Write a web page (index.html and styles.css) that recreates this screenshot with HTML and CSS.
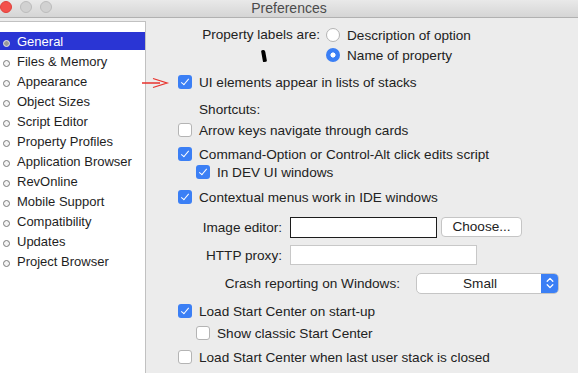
FILE: index.html
```html
<!DOCTYPE html>
<html lang="en">
<head>
  <meta charset="UTF-8">
  <title>Preferences</title>
  <link rel="stylesheet" href="styles.css">
</head>
<body>
  <div class="window">
    <!-- Title bar -->
    <div class="titlebar">
      <span class="light red"></span>
      <span class="light"></span>
      <span class="light"></span>
      <div class="title">Preferences</div>
    </div>

    <div class="content">
      <ul class="sidebar">
        <li class="selected">General</li>
        <li>Files &amp; Memory</li>
        <li>Appearance</li>
        <li>Object Sizes</li>
        <li>Script Editor</li>
        <li>Property Profiles</li>
        <li>Application Browser</li>
        <li>RevOnline</li>
        <li>Mobile Support</li>
        <li>Compatibility</li>
        <li>Updates</li>
        <li>Project Browser</li>
      </ul>

      <div class="panel">
        <div class="labels-grid">
          <div class="grid-label">Property labels are:</div>
          <div class="option"><span class="radio"></span>Description of option</div>
          <div></div>
          <div class="option"><span class="radio on"></span>Name of property</div>
        </div>

        <div class="row r3"><span class="check on"></span>UI elements appear in lists of stacks</div>
        <div class="row r4 heading">Shortcuts:</div>
        <div class="row r5"><span class="check"></span>Arrow keys navigate through cards</div>
        <div class="row r6"><span class="check on"></span>Command-Option or Control-Alt click edits script</div>
        <div class="row r7 indent"><span class="check on"></span>In DEV UI windows</div>
        <div class="row r8"><span class="check on"></span>Contextual menus work in IDE windows</div>

        <div class="field-row r9">
          <div class="field-label">Image editor:</div>
          <div class="field dark"></div>
          <div class="button">Choose...</div>
        </div>
        <div class="field-row r10">
          <div class="field-label">HTTP proxy:</div>
          <div class="field wide"></div>
        </div>
        <div class="field-row r11">
          <div class="field-label long">Crash reporting on Windows:</div>
          <div class="popup">
            <span class="popup-text">Small</span>
            <span class="stepper">
              <svg width="8" height="12" viewBox="0 0 8 12">
                <path d="M1.2 4.2 L4 1.4 L6.8 4.2 M1.2 7.8 L4 10.6 L6.8 7.8" fill="none" stroke="#fff" stroke-width="1.3" stroke-linecap="round" stroke-linejoin="round"/>
              </svg>
            </span>
          </div>
        </div>

        <div class="row r12"><span class="check on"></span>Load Start Center on start-up</div>
        <div class="row r13 indent"><span class="check"></span>Show classic Start Center</div>
        <div class="row r14"><span class="check"></span>Load Start Center when last user stack is closed</div>
      </div>

      <!-- annotations drawn over the window -->
      <svg class="arrow" width="28" height="12" viewBox="0 0 28 12">
        <path d="M0 6 H18 M11 1.5 L25 6 L11 10.5" fill="none" stroke="#e8322c" stroke-width="1.3"/>
      </svg>
      <span class="mark"></span>
    </div>
  </div>
</body>
</html>
```

FILE: styles.css
```css
body {
  margin: 0;
  font-family: "Liberation Sans", Arial, sans-serif;
  font-size: 13px;
  color: #222;
  background: #ececec;
  overflow: hidden;
}

.window {
  width: 578px;
  height: 373px;
  background: #ececec;
  overflow: hidden;
}

/* Title bar */
.titlebar {
  position: relative;
  height: 16px;
  background: linear-gradient(to bottom, #e9e9e9, #d5d5d5);
  border-bottom: 1px solid #b1b1b1;
  display: flex;
  gap: 8px;
  padding-top: 1px;
  box-sizing: content-box;
}

.light {
  width: 12px;
  height: 12px;
  border-radius: 50%;
  background: #d1d1d1;
  border: 0.5px solid #bcbcbc;
  box-sizing: border-box;
}

.light.red {
  background: #f3514c;
  border-color: #e0403b;
}

.title {
  position: absolute;
  left: 0;
  right: 0;
  top: 1px;
  text-align: center;
  color: #4b4b4b;
  font-size: 14px;
  line-height: 14px;
}

.content {
  position: relative;
  display: flex;
  height: 356px;
  overflow: hidden;
}

/* Sidebar list */
.sidebar {
  list-style: none;
  margin: 3px 0 0 -1px;
  padding: 10px 0 0 0;
  width: 147px;
  background: #fff;
  border: 1px solid #c1c1c1;
  border-bottom: none;
  box-sizing: border-box;
  flex-shrink: 0;
}

.sidebar li {
  position: relative;
  height: 18px;
  line-height: 20px;
  margin-bottom: 2px;
  padding-left: 17px;
  color: #1e1e1e;
  white-space: nowrap;
}

.sidebar li::before {
  content: "";
  position: absolute;
  left: 3px;
  top: 8px;
  width: 5px;
  height: 5px;
  border-radius: 50%;
  border: 1px solid #7a7a7a;
  background: #f4f4f4;
}

.sidebar li.selected {
  background: #2a35d4;
  color: #fff;
}

.sidebar li.selected::before {
  background: #9a9a9a;
  border-color: #e6e6e6;
}

/* Right panel */
.panel {
  flex: 1;
  padding: 8px 0 0 32px;
  font-size: 13.6px;
}

.labels-grid {
  display: grid;
  grid-template-columns: 142px auto;
  column-gap: 6px;
  row-gap: 2px;
}

.grid-label {
  text-align: right;
  line-height: 18px;
  white-space: nowrap;
}

.option {
  display: flex;
  align-items: center;
  gap: 7px;
  height: 18px;
}

.radio {
  width: 14px;
  height: 14px;
  border-radius: 50%;
  border: 1px solid #b4b4b4;
  background: #fff;
  box-sizing: border-box;
}

.radio.on {
  border: none;
  background: radial-gradient(circle, #fff 0 2.3px, #3b7ff5 2.8px);
}

.row {
  display: flex;
  align-items: center;
  gap: 7px;
  height: 18px;
  white-space: nowrap;
}

.indent {
  padding-left: 18px;
}

.heading {
  padding-left: 21px;
}

.check {
  width: 14px;
  height: 14px;
  border-radius: 3px;
  border: 1px solid #b4b4b4;
  background: #fff;
  box-sizing: border-box;
  flex-shrink: 0;
  position: relative;
}

.check.on {
  border: none;
  background: #3b7ff5;
}

.check.on::after {
  content: "";
  position: absolute;
  left: 5px;
  top: 2px;
  width: 3px;
  height: 7px;
  border: solid #fff;
  border-width: 0 1.6px 1.6px 0;
  transform: rotate(40deg);
}

.r3 { margin-top: 9px; }
.r4 { margin-top: 9px; }
.r5 { margin-top: 3px; }
.r6 { margin-top: 6px; }
.r7 { margin-top: 0; }
.r8 { margin-top: 7px; }
.r9 { margin-top: 11px; height: 21px; }
.r10 { margin-top: 8px; }
.r11 { margin-top: 8px; }
.r12 { margin-top: 9px; }
.r13 { margin-top: 4px; }
.r14 { margin-top: 6px; }

.field-row {
  display: flex;
  align-items: center;
  height: 20px;
}

.field-label {
  width: 104px;
  text-align: right;
  margin-right: 8px;
  white-space: nowrap;
}

.field-label.long {
  width: 222px;
  margin-right: 16px;
}

.field {
  width: 187px;
  height: 20px;
  background: #fff;
  border: 1px solid #c8c8c8;
  box-sizing: border-box;
}

.field.dark {
  width: 147px;
  height: 21px;
  border-color: #1c1c1c;
}

.button {
  margin-left: 4px;
  width: 81px;
  height: 20px;
  line-height: 18px;
  text-align: center;
  background: #fff;
  border: 1px solid #c5c5c5;
  border-radius: 4px;
  box-sizing: border-box;
}

.popup {
  display: flex;
  width: 143px;
  height: 21px;
  border: 1px solid #c5c5c5;
  border-radius: 5px;
  background: #fff;
  box-sizing: border-box;
  overflow: hidden;
}

.popup-text {
  flex: 1;
  text-align: center;
  line-height: 19px;
  padding-left: 2px;
}

.stepper {
  width: 17px;
  background: #3b7ff5;
  display: flex;
  align-items: center;
  justify-content: center;
}

/* Overlays: red arrow and the pen mark */
.arrow {
  position: absolute;
  left: 142px;
  top: 59px;
}

.mark {
  position: absolute;
  left: 262px;
  top: 32px;
  width: 4px;
  height: 12px;
  background: #000;
  border-radius: 1px 2px 1px 1px;
  transform: rotate(-10deg);
}
```
